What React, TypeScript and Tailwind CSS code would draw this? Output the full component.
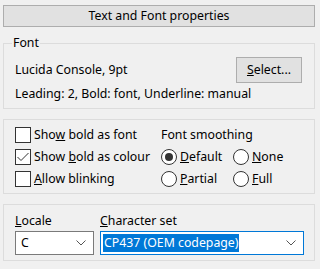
import React from 'react'

function Check({ checked, label }: { checked?: boolean; label: React.ReactNode }) {
    return (
        <div className="flex items-center h-[22px] gap-[3px]">
            <div className="w-[16px] h-[16px] border border-[#333333] bg-white flex items-center justify-center">
                {checked && (
                    <svg width="14" height="14" viewBox="0 0 14 14">
                        <path d="M1.5 7 L5 10.5 L12.5 3" fill="none" stroke="#333333" strokeWidth="1" />
                    </svg>
                )}
            </div>
            <span>{label}</span>
        </div>
    )
}

function Radio({ checked, label, className = '' }: { checked?: boolean; label: React.ReactNode; className?: string }) {
    return (
        <div className={`flex items-center h-[22px] gap-[3px] ${className}`}>
            <div className="w-[16px] h-[16px] rounded-full border border-[#333333] bg-white flex items-center justify-center">
                {checked && <div className="w-[8px] h-[8px] rounded-full bg-[#333333]" />}
            </div>
            <span>{label}</span>
        </div>
    )
}

function Chevron() {
    return (
        <svg width="10" height="6" viewBox="0 0 10 6">
            <path d="M0.5 0.5 L5 5 L9.5 0.5" fill="none" stroke="#555555" strokeWidth="1" />
        </svg>
    )
}

export default function App() {
    return (
        <div
            className="w-[320px] h-[269px] bg-[#f0f0f0] pt-[5px] pl-[3px] text-[12.3px] text-black"
            style={{ fontFamily: '"Noto Sans", sans-serif' }}
        >
            <div className="w-[312px] flex flex-col">
                {/* Title */}
                <div className="h-[22px] border border-[#adadad] bg-[#e1e1e1] flex items-center justify-center">
                    Text and Font properties
                </div>

                {/* Font group */}
                <fieldset className="mt-[8px] h-[74px] border border-[#dcdcdc] px-[11px]">
                    <legend className="px-[1px] -ml-[3px] leading-[16px]">Font</legend>
                    <div className="flex items-center justify-between h-[26px] mt-[6px]">
                        <span>Lucida Console, 9pt</span>
                        <button className="w-[66px] h-[26px] border border-[#adadad] bg-[#e1e1e1] mr-[1px]">
                            <u>S</u>elect...
                        </button>
                    </div>
                    <div className="h-[22px] flex items-center">
                        Leading: 2, Bold: font, Underline: manual
                    </div>
                </fieldset>

                {/* Options group */}
                <div className="mt-[10px] h-[75px] border border-[#dcdcdc] flex pl-[11px] pt-[4px]">
                    <div className="w-[146px] flex flex-col">
                        <Check label={<>Sho<u>w</u> bold as font</>} />
                        <Check checked label={<>Show <u>b</u>old as colour</>} />
                        <Check label={<><u>A</u>llow blinking</>} />
                    </div>
                    <div className="flex flex-col">
                        <div className="h-[22px] flex items-center">Font smoothing</div>
                        <div className="flex">
                            <Radio checked className="w-[72px]" label={<><u>D</u>efault</>} />
                            <Radio label={<><u>N</u>one</>} />
                        </div>
                        <div className="flex">
                            <Radio className="w-[72px]" label={<><u>P</u>artial</>} />
                            <Radio label={<><u>F</u>ull</>} />
                        </div>
                    </div>
                </div>

                {/* Locale group */}
                <div className="mt-[10px] h-[57px] border border-[#dcdcdc] flex gap-[6px] pl-[11px] pt-[6px]">
                    <div className="flex flex-col">
                        <div className="h-[20px] flex items-center"><u>L</u>ocale</div>
                        <div className="w-[79px] h-[24px] border border-[#7a7a7a] bg-white flex items-center justify-between pl-[5px] pr-[7px]">
                            <span>C</span>
                            <Chevron />
                        </div>
                    </div>
                    <div className="flex flex-col">
                        <div className="h-[20px] flex items-center"><u>C</u>haracter set</div>
                        <div className="w-[204px] h-[24px] border border-[#0078d7] bg-white flex items-center justify-between pl-[2px] pr-[7px]">
                            <span className="bg-[#0078d7] text-white px-[1px] leading-[18px]">CP437 (OEM codepage)</span>
                            <Chevron />
                        </div>
                    </div>
                </div>
            </div>
        </div>
    )
}
